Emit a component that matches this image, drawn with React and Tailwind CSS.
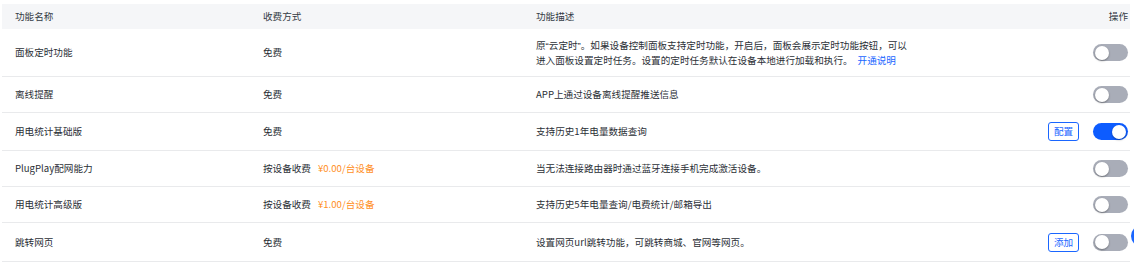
import { useState } from "react";

// narrow western quotes, as in the original
const Q = ({ children }) => <span style={{ fontFamily: '"Liberation Sans", sans-serif' }}>{children}</span>;

const rows = [
  {
    name: "面板定时功能",
    fee: "免费",
    desc: (
      <>
        原<Q>“</Q>云定时<Q>”</Q>。如果设备控制面板支持定时功能，开启后，面板会展示定时功能按钮，可以
        <br />
        进入面板设置定时任务。设置的定时任务默认在设备本地进行加载和执行。
        <span className="ml-[5px] text-[#1a66ff]">开通说明</span>
      </>
    ),
    on: false,
    h: "h-[48px]",
  },
  { name: "离线提醒", fee: "免费", desc: "APP上通过设备离线提醒推送信息", on: false, h: "h-[36px]" },
  { name: "用电统计基础版", fee: "免费", desc: "支持历史1年电量数据查询", on: true, btn: "配置", h: "h-[38px]" },
  { name: "PlugPlay配网能力", fee: "按设备收费", price: "¥0.00/台设备", desc: "当无法连接路由器时通过蓝牙连接手机完成激活设备。", on: false, h: "h-[36px]" },
  { name: "用电统计高级版", fee: "按设备收费", price: "¥1.00/台设备", desc: "支持历史5年电量查询/电费统计/邮箱导出", on: false, h: "h-[36px]" },
  { name: "跳转网页", fee: "免费", desc: "设置网页url跳转功能，可跳转商城、官网等网页。", on: false, btn: "添加", h: "h-[39px]" },
];

const Toggle = ({ on, onClick }) => (
  <button
    onClick={onClick}
    className={`relative h-[17px] w-[35px] rounded-full ${on ? "bg-[#0d5cff]" : "bg-[#a9adb8]"}`}
  >
    <span
      className={`absolute top-[1.5px] h-[14px] w-[14px] rounded-full bg-white shadow-[0_1px_2px_rgba(0,0,0,0.35)] ${on ? "left-[19px]" : "left-[2px]"}`}
    />
  </button>
);

export default function App() {
  const [states, setStates] = useState(rows.map((r) => r.on));

  const flip = (i) => setStates((s) => s.map((v, j) => (j === i ? !v : v)));

  return (
    <div
      className="relative h-[274px] w-[1134px] overflow-hidden bg-white pt-[4px] text-[9.6px] text-[#2b2f36]"
      style={{ fontFamily: '"Noto Sans CJK SC", "Noto Sans", sans-serif' }}
    >
      <div className="ml-[2px] w-[1128px]">
        {/* header */}
        <div className="grid h-[25px] grid-cols-[248px_273px_1fr_auto] items-center bg-[#f5f6f8] pl-[13px] pr-[2px] text-[#333a44]">
          <div>功能名称</div>
          <div>收费方式</div>
          <div>功能描述</div>
          <div className="text-right">操作</div>
        </div>

        {rows.map((r, i) => (
          <div
            key={r.name}
            className={`grid ${r.h} grid-cols-[248px_273px_1fr_auto] items-center border-b border-[#e9eaec] pl-[13px] pr-[2px]`}
          >
            <div>{r.name}</div>
            <div>
              {r.fee}
              {r.price && <span className="ml-[7px] text-[#ff8f1f]">{r.price}</span>}
            </div>
            <div className="leading-[15px]">{r.desc}</div>
            <div className="flex items-center gap-[14px]">
              {r.btn && (
                <button className="flex h-[19px] w-[31px] items-center justify-center rounded-[3px] border border-[#1a66ff] text-[9.6px] text-[#1a66ff]">
                  {r.btn}
                </button>
              )}
              <Toggle on={states[i]} onClick={() => flip(i)} />
            </div>
          </div>
        ))}
      </div>

      {/* floating helper button, mostly off screen */}
      <div className="absolute left-[1131px] top-[225px] h-[22px] w-[22px] rounded-full bg-[#1a66ff]" />
    </div>
  );
}
